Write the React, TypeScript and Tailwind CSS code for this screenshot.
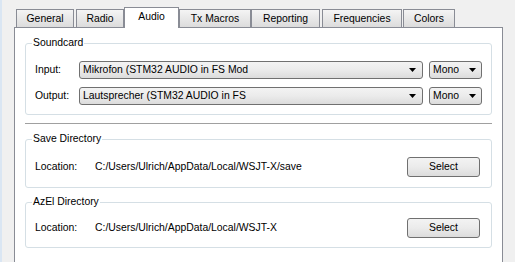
import React from "react";

const tabs = [
  { label: "General", cls: "ml-[2px] w-[58px]" },
  { label: "Radio", cls: "ml-[2px] w-[48px]" },
  { label: "Audio", cls: "w-[55px]", active: true },
  { label: "Tx Macros", cls: "w-[72px]" },
  { label: "Reporting", cls: "w-[69px]" },
  { label: "Frequencies", cls: "ml-[2px] w-[80px]" },
  { label: "Colors", cls: "ml-[1px] w-[52px]" },
];

function Arrow() {
  return (
    <svg width="7" height="4" viewBox="0 0 7 4" className="shrink-0">
      <path d="M0 0H7L3.5 4Z" fill="#000" />
    </svg>
  );
}

function Combo({ text, className }: { text: string; className: string }) {
  return (
    <div
      className={`h-[18px] flex items-center justify-between pl-[3px] border border-[#707070] rounded-[3px] bg-linear-to-b from-[#f3f3f3] via-[#ebebeb] to-[#dcdcdc] ${className}`}
    >
      <span className="whitespace-nowrap overflow-hidden">{text}</span>
      <Arrow />
    </div>
  );
}

function SelectButton() {
  return (
    <div className="w-[73px] h-[20px] flex items-center justify-center border border-[#707070] rounded-[3px] bg-linear-to-b from-[#f3f3f3] via-[#ebebeb] to-[#dcdcdc]">
      Select
    </div>
  );
}

function Group({
  title,
  className,
  children,
}: {
  title: string;
  className?: string;
  children: React.ReactNode;
}) {
  return (
    <fieldset
      className={`border border-[#d5dfe5] rounded-[3px] p-0 m-0 min-w-0 ${className ?? ""}`}
    >
      <legend className="ml-[6px] px-[1px] leading-[12px]">{title}</legend>
      {children}
    </fieldset>
  );
}

export default function App() {
  return (
    <div
      className="w-[515px] h-[262px] bg-[#f0f0f0] overflow-hidden flex text-black text-[10.4px]"
      style={{ fontFamily: '"Liberation Sans", Arial, sans-serif' }}
    >
      <div className="w-[2px] h-full bg-[#dae6f3]" />
      <div className="ml-[12px] w-[489px] flex flex-col">
        <div className="h-[27px] flex items-end relative z-10">
          {tabs.map((t) =>
            t.active ? (
              <div
                key={t.label}
                className={`${t.cls} h-[21px] -mb-[1px] bg-white border border-b-0 border-[#898c95] flex items-center justify-center pb-[2px]`}
              >
                {t.label}
              </div>
            ) : (
              <div
                key={t.label}
                className={`${t.cls} h-[18px] border border-b-0 border-[#898c95] bg-linear-to-b from-[#f4f4f4] to-[#dcdcdc] flex items-center justify-center`}
              >
                {t.label}
              </div>
            )
          )}
        </div>
        <div className="flex-1 bg-white border border-b-0 border-[#898c95] px-[10px] pt-[9px]">
          <Group title="Soundcard">
            <div className="pt-[12px] pb-[9px] pl-[9px] pr-[9px] flex flex-col gap-[8px]">
              <div className="flex items-center">
                <span className="w-[44px]">Input:</span>
                <Combo text="Mikrofon (STM32 AUDIO in FS Mod" className="flex-1 pr-[6px]" />
                <Combo text="Mono" className="ml-[6px] w-[53px] pr-[5px]" />
              </div>
              <div className="flex items-center">
                <span className="w-[44px]">Output:</span>
                <Combo text="Lautsprecher (STM32 AUDIO in FS" className="flex-1 pr-[6px]" />
                <Combo text="Mono" className="ml-[6px] w-[53px] pr-[5px]" />
              </div>
            </div>
          </Group>
          <div className="h-px bg-[#a0a0a0] mt-[8px]" />
          <Group title="Save Directory" className="mt-[9px]">
            <div className="pt-[12px] pb-[10px] pl-[9px] pr-[11px] flex items-center">
              <span className="w-[60px]">Location:</span>
              <span className="flex-1">C:/Users/Ulrich/AppData/Local/WSJT-X/save</span>
              <SelectButton />
            </div>
          </Group>
          <Group title="AzEl Directory" className="mt-[8px]">
            <div className="pt-[10px] pb-[9px] pl-[9px] pr-[11px] flex items-center">
              <span className="w-[60px]">Location:</span>
              <span className="flex-1">C:/Users/Ulrich/AppData/Local/WSJT-X</span>
              <SelectButton />
            </div>
          </Group>
        </div>
      </div>
    </div>
  );
}
